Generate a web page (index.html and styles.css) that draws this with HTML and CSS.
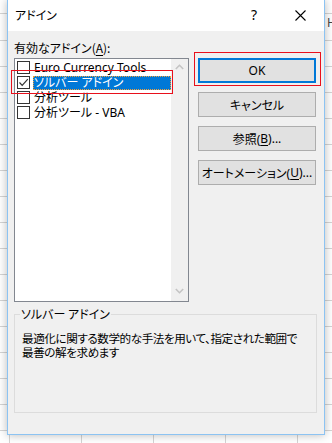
FILE: index.html
```html
<!DOCTYPE html>
<html lang="ja">
<head>
<meta charset="utf-8">
<link rel="stylesheet" href="styles.css">
</head>
<body>
<div class="sheet">
  <div class="sheet-head"><span class="col-h">H</span></div>
</div>
<div class="dialog">
  <div class="titlebar">
    <span class="title">アドイン</span>
    <span class="help">?</span>
    <span class="close"><svg width="11" height="11" viewBox="0 0 11 11"><path d="M0.5 0.5 L10.5 10.5 M10.5 0.5 L0.5 10.5" stroke="#000" stroke-width="1.1" fill="none"/></svg></span>
  </div>
  <div class="content">
    <div class="label">有効なアドイン(<u>A</u>):</div>
    <div class="main">
      <div class="listbox">
        <ul class="items">
          <li class="item"><span class="cb"></span><span class="txt">Euro Currency Tools</span></li>
          <li class="item selected"><span class="cb"><svg width="11" height="11" viewBox="0 0 11 11"><path d="M1.5 5.5 L4.2 8.3 L9.8 2.2" stroke="#333" stroke-width="1.2" fill="none"/></svg></span><span class="txt">ソルバー アドイン</span></li>
          <li class="item"><span class="cb"></span><span class="txt">分析ツール</span></li>
          <li class="item"><span class="cb"></span><span class="txt">分析ツール - VBA</span></li>
        </ul>
        <div class="scrollbar">
          <svg width="9" height="6" viewBox="0 0 9 6"><path d="M0.8 5 L4.5 1.3 L8.2 5" stroke="#c4c4c4" stroke-width="1.6" fill="none"/></svg>
          <svg width="9" height="6" viewBox="0 0 9 6"><path d="M0.8 1 L4.5 4.7 L8.2 1" stroke="#c4c4c4" stroke-width="1.6" fill="none"/></svg>
        </div>
      </div>
      <div class="buttons">
        <div class="btn default">OK</div>
        <div class="btn">キャンセル</div>
        <div class="btn">参照(<u>B</u>)...</div>
        <div class="btn">オートメーション(<u>U</u>)...</div>
      </div>
    </div>
    <fieldset class="group">
      <legend>ソルバー アドイン</legend>
      <p class="desc">最適化に関する数学的な手法を用いて、指定された範囲で<br>最善の解を求めます</p>
    </fieldset>
  </div>
  <div class="annot annot-row"></div>
  <div class="annot annot-ok"></div>
</div>
</body>
</html>
```

FILE: styles.css
```css
html, body {
  margin: 0;
  padding: 0;
}
body {
  width: 332px;
  height: 443px;
  overflow: hidden;
  position: relative;
  font-family: "Noto Sans", "Noto Sans CJK JP", sans-serif;
  font-size: 12px;
  color: #000;
  background-color: #ffffff;
  background-image:
    repeating-linear-gradient(to bottom, transparent 0, transparent 25px, #d4d4d4 25px, #d4d4d4 26px),
    repeating-linear-gradient(to right, transparent 0, transparent 9px, #d4d4d4 9px, #d4d4d4 10px, transparent 10px, transparent 72px);
  background-position: 0 15px, 0 0;
}
.sheet {
  height: 443px;
}
.sheet-head {
  height: 32px;
  display: flex;
  justify-content: flex-end;
  align-items: flex-end;
}
.col-h {
  font-family: "Noto Sans", sans-serif;
  font-size: 12px;
  color: #444;
  margin-right: -4px;
  line-height: 18px;
}
.dialog {
  position: absolute;
  left: 7px;
  top: 0;
  width: 316px;
  height: 434px;
  border: 1px solid #8cc3f2;
  border-top: none;
  background: #f0f0f0;
  box-shadow: 0 0 9px rgba(0, 0, 0, 0.28);
  font-feature-settings: "palt";
}
.titlebar {
  height: 31px;
  background: #ffffff;
  display: flex;
  align-items: center;
}
.title {
  font-family: "Noto Sans CJK JP", sans-serif;
  font-size: 12px;
  margin-left: 7px;
  flex: 1;
  padding-bottom: 2px;
}
.help {
  font-family: "Noto Sans", sans-serif;
  font-size: 14px;
  width: 14px;
  margin-right: 30px;
  padding-bottom: 2px;
}
.close {
  width: 11px;
  height: 11px;
  margin-right: 18px;
  display: flex;
}
.content {
  padding: 9px 7px 0 6px;
}
.label {
  height: 18px;
  line-height: 16px;
  font-family: "Noto Sans CJK JP", sans-serif;
}
u {
  text-decoration-thickness: 1px;
  text-underline-offset: 2px;
}
.main {
  display: flex;
  gap: 9px;
}
.listbox {
  width: 173px;
  height: 242px;
  border: 1px solid #828790;
  background: #ffffff;
  display: flex;
}
.items {
  list-style: none;
  margin: 0;
  padding: 1px 0 0 2px;
  flex: 1;
}
.item {
  height: 15px;
  display: flex;
  align-items: center;
  gap: 3px;
}
.cb {
  width: 11px;
  height: 11px;
  border: 1px solid #333333;
  background: #fff;
  flex: none;
  display: flex;
}
.txt {
  flex: 1;
  height: 14px;
  line-height: 14px;
  padding-left: 1px;
  font-family: "Noto Sans", "Noto Sans CJK JP", sans-serif;
  white-space: nowrap;
  box-sizing: border-box;
}
.selected .txt {
  background: #0078d7;
  color: #fff;
  outline: 1px dotted #f4a13a;
  outline-offset: -1px;
}
.scrollbar {
  width: 17px;
  background: #f0f0f0;
  display: flex;
  flex-direction: column;
  justify-content: space-between;
  align-items: center;
  padding: 5px 0 7px;
}
.buttons {
  display: flex;
  flex-direction: column;
  gap: 9px;
  width: 118px;
}
.btn {
  height: 23px;
  border: 1px solid #adadad;
  background: #e1e1e1;
  display: flex;
  align-items: center;
  justify-content: center;
  font-family: "Noto Sans", "Noto Sans CJK JP", sans-serif;
  font-size: 12px;
}
.btn.default {
  border: 2px solid #0078d7;
  height: 21px;
}
.group {
  margin: 5px 0 0 0;
  padding: 0 4px 0 5px;
  border: 1px solid #dcdcdc;
  height: 104px;
  box-sizing: content-box;
  min-width: 0;
}
.group legend {
  padding: 0 1px;
  line-height: 14px;
  font-family: "Noto Sans CJK JP", sans-serif;
}
.desc {
  margin: 10px 0 0 2px;
  line-height: 14px;
  font-size: 11.6px;
  letter-spacing: -0.45px;
  white-space: nowrap;
  font-family: "Noto Sans CJK JP", sans-serif;
}
.annot {
  position: absolute;
  border: 1px solid #e8101c;
}
.annot-row {
  left: 3px;
  top: 70px;
  width: 160px;
  height: 22px;
}
.annot-ok {
  left: 186px;
  top: 52px;
  width: 125px;
  height: 32px;
}
```
